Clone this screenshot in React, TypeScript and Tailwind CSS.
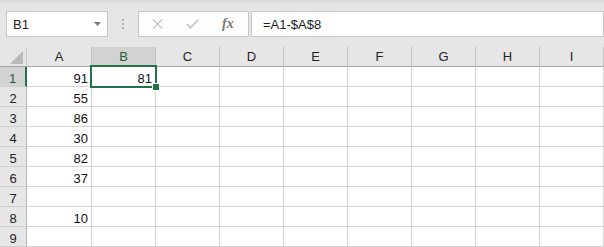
import React from 'react';

const cols = ['A', 'B', 'C', 'D', 'E', 'F', 'G', 'H', 'I'];
const data: Record<number, Record<string, string>> = {
  1: { A: '91', B: '81' },
  2: { A: '55' },
  3: { A: '86' },
  4: { A: '30' },
  5: { A: '82' },
  6: { A: '37' },
  8: { A: '10' },
};
const rows = [1, 2, 3, 4, 5, 6, 7, 8, 9];

export default function App() {
  return (
    <div className="w-[604px] h-[247px] overflow-hidden bg-white font-['Liberation_Sans',Arial,sans-serif] text-[#1f1f1f]">
      {/* Formula bar band */}
      <div className="h-[47px] bg-[#e6e6e6] border-t-[3px] border-[#dcdcdc] pt-[8px] flex items-start">
        <div className="ml-[6px] w-[102px] h-[26px] border border-[#c6c6c6] bg-white flex items-center justify-between pl-[6px] pr-[6px]">
          <span className="text-[13px] leading-none text-[#222]">B1</span>
          <svg width="7" height="4" viewBox="0 0 7 4">
            <path d="M0 0 L7 0 L3.5 4 Z" fill="#7a7a7a" />
          </svg>
        </div>
        <div className="w-[30px] h-[26px] flex flex-col items-center justify-center gap-[2px]">
          <div className="w-[2px] h-[2px] bg-[#b4b4b4]" />
          <div className="w-[2px] h-[2px] bg-[#b4b4b4]" />
          <div className="w-[2px] h-[2px] bg-[#b4b4b4]" />
        </div>
        <div className="w-[111px] h-[26px] border border-[#c6c6c6] bg-[#fdfdfd] flex items-center">
          <svg className="ml-[13px]" width="11" height="10" viewBox="0 0 11 10">
            <path d="M1 0.5 L10 9.5 M10 0.5 L1 9.5" stroke="#c2c2c2" strokeWidth="1.2" fill="none" />
          </svg>
          <svg className="ml-[23px]" width="13" height="10" viewBox="0 0 13 10">
            <path d="M0.8 5 L4.5 8.8 L12.2 0.8" stroke="#c2c2c2" strokeWidth="1.6" fill="none" />
          </svg>
          <span className="ml-[23px] font-['Liberation_Serif',serif] italic font-bold text-[14px] leading-none text-[#777]">
            fx
          </span>
        </div>
        <div className="ml-[2px] w-[353px] h-[26px] border border-[#c6c6c6] bg-white flex items-center pl-[11px]">
          <span className="text-[13px] leading-none text-[#222]">=A1-$A$8</span>
        </div>
      </div>

      {/* Grid */}
      <div className="relative grid grid-cols-[27px_65px_repeat(8,64px)] grid-rows-[repeat(10,20px)]">
        {/* corner */}
        <div className="bg-[#e6e6e6] border-r border-b border-r-[#c8c8c8] border-b-[#a3a3a3] flex items-end justify-end pr-[3px] pb-[2px]">
          <svg width="13" height="13" viewBox="0 0 13 13">
            <path d="M13 0 L13 13 L0 13 Z" fill="#b9b9b9" />
          </svg>
        </div>
        {cols.map((c) => (
          <div
            key={c}
            className={
              c === 'B'
                ? 'bg-[#d2d2d2] border-r border-b border-r-[#c0c0c0] border-b-[#217346] text-center text-[13px] leading-[19px] text-[#1d5c3c]'
                : 'bg-[#e6e6e6] border-r border-b border-r-[#c0c0c0] border-b-[#a3a3a3] text-center text-[13px] leading-[19px] text-[#222]'
            }
          >
            {c}
          </div>
        ))}
        {rows.map((r) => (
          <React.Fragment key={r}>
            <div
              className={
                r === 1
                  ? 'bg-[#d2d2d2] border-r-2 border-b border-r-[#217346] border-b-[#cfcfcf] text-center text-[13px] leading-[17px] pt-[3px] text-[#1d5c3c]'
                  : 'bg-[#e6e6e6] border-r border-b border-r-[#b5b5b5] border-b-[#cfcfcf] text-center text-[13px] leading-[17px] pt-[3px] text-[#222]'
              }
            >
              {r}
            </div>
            {cols.map((c) => (
              <div
                key={c}
                className="border-r border-b border-[#d4d4d4] text-right pr-[3px] text-[13px] leading-[17px] pt-[3px] text-[#111]"
              >
                {data[r]?.[c] ?? ''}
              </div>
            ))}
          </React.Fragment>
        ))}
        {/* selection */}
        <div className="absolute left-[90px] top-[18px] w-[67px] h-[23px] border-2 border-[#217346]" />
        <div className="absolute left-[152px] top-[36px] w-[8px] h-[8px] bg-[#217346] border border-white" />
      </div>
    </div>
  );
}
